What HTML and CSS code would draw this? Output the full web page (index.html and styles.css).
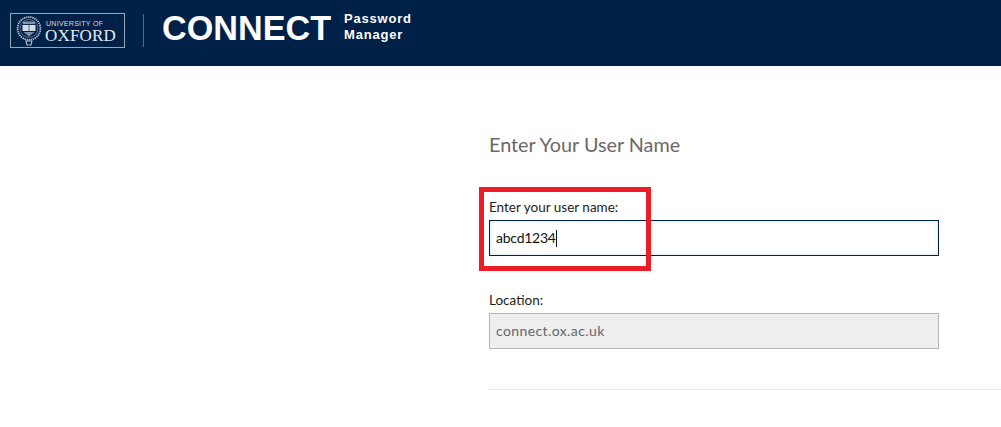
FILE: index.html
```html
<!DOCTYPE html>
<html lang="en">
<head>
<meta charset="utf-8">
<title>CONNECT Password Manager</title>
<link rel="stylesheet" href="styles.css">
</head>
<body>
<header class="topbar">
  <div class="logo">
    <svg class="crest" viewBox="0 0 26 30" width="26" height="30" aria-hidden="true">
      <circle cx="13" cy="12.5" r="11.4" fill="none" stroke="#b3bdcc" stroke-width="1.8" stroke-dasharray="1.4 .7"/>
      <circle cx="13" cy="12.5" r="8.9" fill="none" stroke="#7f8fa8" stroke-width=".7"/>
      <rect x="7" y="5.5" width="12" height="2.6" fill="#8594ab"/>
      <rect x="6.5" y="9" width="13" height="6" fill="#d6dce5"/>
      <path d="M13 9v6" stroke="#3f5577" stroke-width=".8"/>
      <path d="M7.5 16h11l-5.5 4.5z" fill="#7f8fa8"/>
      <path d="M10 25h6l-1 4h-4z" fill="none" stroke="#b3bdcc" stroke-width="1.1"/>
    </svg>
    <div class="wordmark">
      <span class="uni">UNIVERSITY OF</span>
      <span class="ox">OXFORD</span>
    </div>
  </div>
  <div class="divider"></div>
  <div class="brand">CONNECT</div>
  <div class="sub">Password<br>Manager</div>
</header>
<main class="content">
  <h1 class="title">Enter Your User Name</h1>
  <div class="field first">
    <label class="label">Enter your user name:</label>
    <div class="input active">abcd1234<span class="caret"></span></div>
  </div>
  <div class="field">
    <label class="label">Location:</label>
    <div class="input disabled">connect.ox.ac.uk</div>
  </div>
  <hr class="rule">
  <div class="highlight"></div>
</main>
</body>
</html>
```
FILE: styles.css
```css
* { box-sizing: border-box; }
html, body { margin: 0; height: 100%; background: #fff; overflow: hidden; }
body { font-family: "Lato", "Open Sans", sans-serif; }
.topbar {
  height: 66px;
  background: #002147;
  display: flex;
  align-items: flex-start;
  padding: 13px 0 0 10px;
  color: #fff;
}
.logo {
  width: 115px;
  height: 35px;
  border: 1px solid #9aa6b8;
  display: flex;
  align-items: center;
  padding-left: 5px;
  gap: 4px;
}
.crest { flex: none; margin-top: 1px; }
.wordmark { display: flex; flex-direction: column; color: #d5dbe4; }
.uni { font: 7px/9px "Liberation Sans", sans-serif; letter-spacing: .28px; }
.ox { font: 17px/15px "Liberation Serif", serif; letter-spacing: .2px; color: #e6eaf0; margin-left: -1px; }
.divider { width: 1px; height: 33px; background: #55688a; margin: 1px 18px 0 18px; }
.brand {
  font: bold 34.2px/1 "Liberation Sans", sans-serif;
  margin-top: -2px;
  margin-right: 13px;
}
.sub {
  font: bold 13px/16px "Liberation Sans", sans-serif;
  letter-spacing: .8px;
  margin-top: -2px;
}
.content { position: relative; padding: 65px 0 0 489px; }
.title {
  margin: 0;
  font-weight: 400;
  font-size: 19.8px;
  line-height: 26px;
  color: #6d6767;
}
.field.first { margin-top: 42px; }
.field { margin-top: 36px; }
.label { display: block; font-size: 13.5px; line-height: 17px; color: #222; margin-bottom: 4px; }
.input {
  width: 450px;
  height: 36px;
  padding-left: 6px;
  font-size: 14px;
  line-height: 34px;
}
.active {
  border: 1px solid #002147;
  box-shadow: inset 0 0 4px rgba(102, 160, 210, .3);
  color: #111;
  letter-spacing: -.25px;
}
.caret { display: inline-block; width: 1px; height: 17px; background: #111; vertical-align: -4px; }
.disabled { background: #eee; border: 1px solid #b5b5b5; color: #666; letter-spacing: .4px; }
.rule { margin: 40px 0 0; border: 0; border-top: 1px solid #e6e6e6; }
.highlight {
  position: absolute;
  left: 479px;
  top: 121px;
  width: 172px;
  height: 84px;
  border: 5px solid #ee1c25;
}
```
